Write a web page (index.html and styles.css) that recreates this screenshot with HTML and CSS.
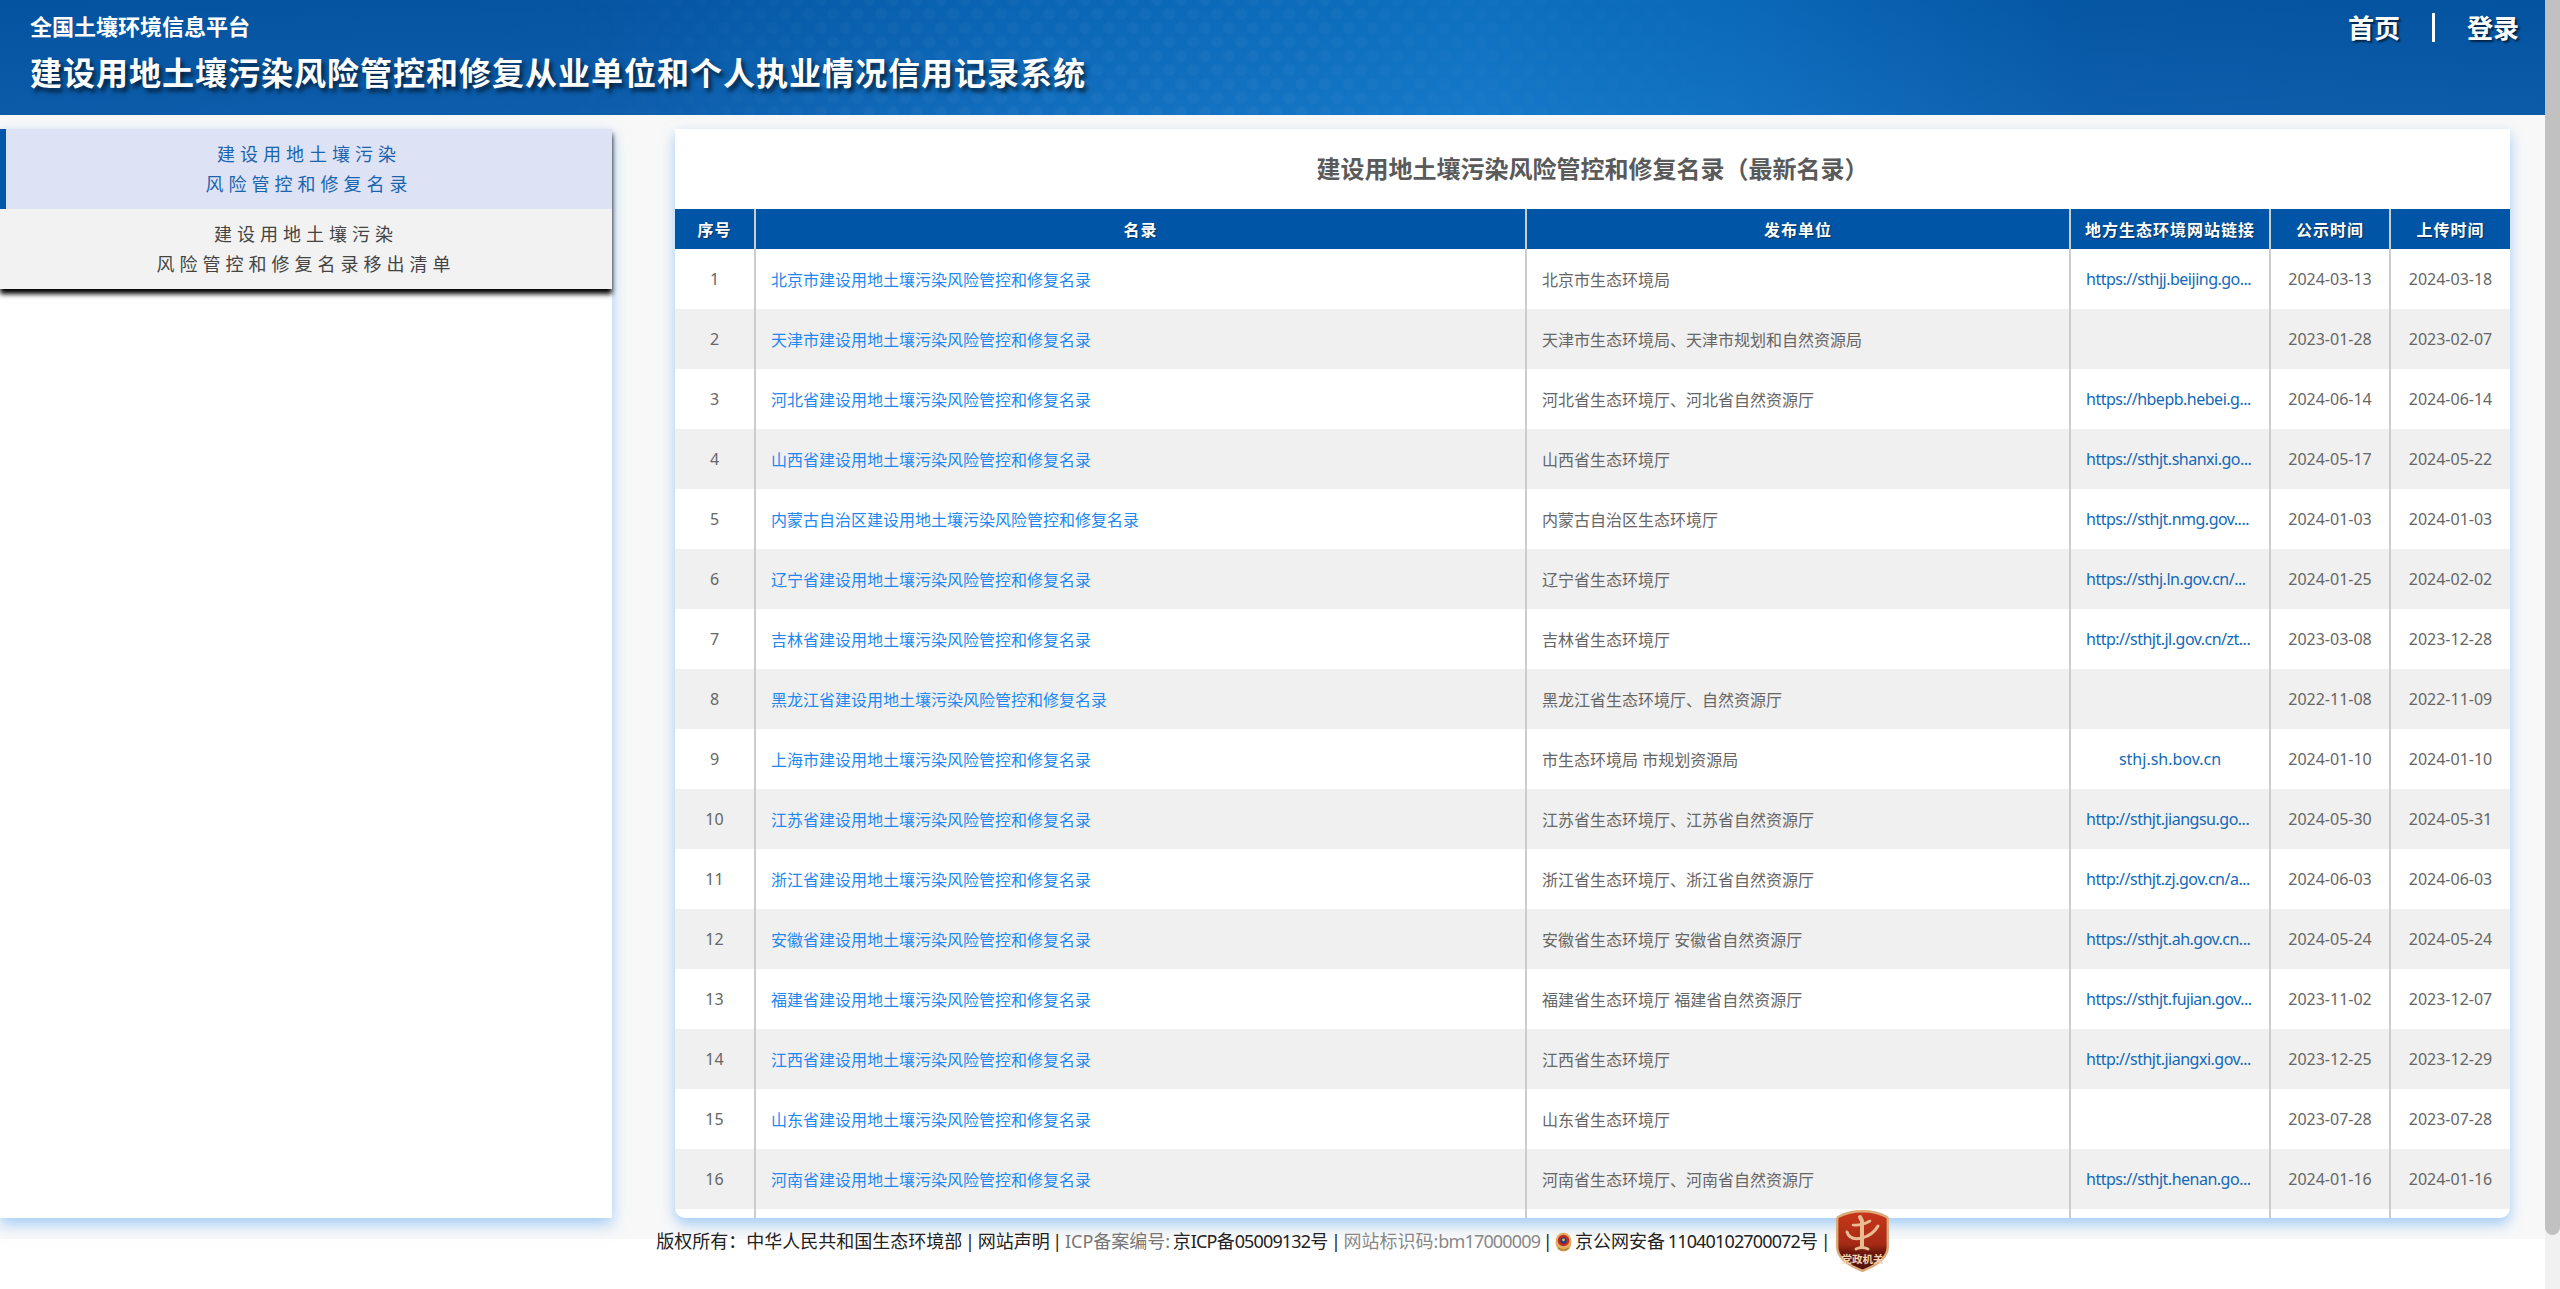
FILE: index.html
```html
<!DOCTYPE html>
<html lang="zh-CN">
  <head>
    <meta charset="utf-8" />
    <title>建设用地土壤污染风险管控和修复从业单位和个人执业情况信用记录系统</title>
    <link rel="stylesheet" href="styles.css">
  </head>
  <body>
    <div class="page">
      <div class="content">
        <header class="top-bar">
          <div class="brand">
            <p class="brand-small">全国土壤环境信息平台</p>
            <h1 class="brand-title">建设用地土壤污染风险管控和修复从业单位和个人执业情况信用记录系统</h1>
          </div>
          <nav class="top-nav">
            <a href="#">首页</a>
            <span class="top-nav-line"></span>
            <a href="#">登录</a>
          </nav>
        </header>

        <main class="layout">
          <aside class="side-panel">
            <ul class="side-menu">
              <li class="side-item active">建设用地土壤污染<br />风险管控和修复名录</li>
              <li class="side-item">建设用地土壤污染<br />风险管控和修复名录移出清单</li>
            </ul>
          </aside>

          <section class="card">
            <h2 class="card-title">建设用地土壤污染风险管控和修复名录（最新名录）</h2>
            <table class="list">
              <colgroup>
                <col class="col-no" />
                <col class="col-name" />
                <col class="col-org" />
                <col class="col-link" />
                <col class="col-date" />
                <col class="col-last" />
              </colgroup>
              <thead>
                <tr>
                  <th>序号</th>
                  <th>名录</th>
                  <th>发布单位</th>
                  <th>地方生态环境网站链接</th>
                  <th>公示时间</th>
                  <th>上传时间</th>
                </tr>
              </thead>
              <tbody>
                <tr>
                  <td>1</td>
                  <td class="left"><a class="name" href="#">北京市建设用地土壤污染风险管控和修复名录</a></td>
                  <td class="left">北京市生态环境局</td>
                  <td class="url"><a href="#">https://sthjj.beijing.go...</a></td>
                  <td>2024-03-13</td>
                  <td>2024-03-18</td>
                </tr>
                <tr>
                  <td>2</td>
                  <td class="left"><a class="name" href="#">天津市建设用地土壤污染风险管控和修复名录</a></td>
                  <td class="left">天津市生态环境局、天津市规划和自然资源局</td>
                  <td class="url"></td>
                  <td>2023-01-28</td>
                  <td>2023-02-07</td>
                </tr>
                <tr>
                  <td>3</td>
                  <td class="left"><a class="name" href="#">河北省建设用地土壤污染风险管控和修复名录</a></td>
                  <td class="left">河北省生态环境厅、河北省自然资源厅</td>
                  <td class="url"><a href="#">https://hbepb.hebei.g...</a></td>
                  <td>2024-06-14</td>
                  <td>2024-06-14</td>
                </tr>
                <tr>
                  <td>4</td>
                  <td class="left"><a class="name" href="#">山西省建设用地土壤污染风险管控和修复名录</a></td>
                  <td class="left">山西省生态环境厅</td>
                  <td class="url"><a href="#">https://sthjt.shanxi.go...</a></td>
                  <td>2024-05-17</td>
                  <td>2024-05-22</td>
                </tr>
                <tr>
                  <td>5</td>
                  <td class="left"><a class="name" href="#">内蒙古自治区建设用地土壤污染风险管控和修复名录</a></td>
                  <td class="left">内蒙古自治区生态环境厅</td>
                  <td class="url"><a href="#">https://sthjt.nmg.gov....</a></td>
                  <td>2024-01-03</td>
                  <td>2024-01-03</td>
                </tr>
                <tr>
                  <td>6</td>
                  <td class="left"><a class="name" href="#">辽宁省建设用地土壤污染风险管控和修复名录</a></td>
                  <td class="left">辽宁省生态环境厅</td>
                  <td class="url"><a href="#">https://sthj.ln.gov.cn/...</a></td>
                  <td>2024-01-25</td>
                  <td>2024-02-02</td>
                </tr>
                <tr>
                  <td>7</td>
                  <td class="left"><a class="name" href="#">吉林省建设用地土壤污染风险管控和修复名录</a></td>
                  <td class="left">吉林省生态环境厅</td>
                  <td class="url"><a href="#">http://sthjt.jl.gov.cn/zt...</a></td>
                  <td>2023-03-08</td>
                  <td>2023-12-28</td>
                </tr>
                <tr>
                  <td>8</td>
                  <td class="left"><a class="name" href="#">黑龙江省建设用地土壤污染风险管控和修复名录</a></td>
                  <td class="left">黑龙江省生态环境厅、自然资源厅</td>
                  <td class="url"></td>
                  <td>2022-11-08</td>
                  <td>2022-11-09</td>
                </tr>
                <tr>
                  <td>9</td>
                  <td class="left"><a class="name" href="#">上海市建设用地土壤污染风险管控和修复名录</a></td>
                  <td class="left">市生态环境局 市规划资源局</td>
                  <td class="url center"><a href="#">sthj.sh.bov.cn</a></td>
                  <td>2024-01-10</td>
                  <td>2024-01-10</td>
                </tr>
                <tr>
                  <td>10</td>
                  <td class="left"><a class="name" href="#">江苏省建设用地土壤污染风险管控和修复名录</a></td>
                  <td class="left">江苏省生态环境厅、江苏省自然资源厅</td>
                  <td class="url"><a href="#">http://sthjt.jiangsu.go...</a></td>
                  <td>2024-05-30</td>
                  <td>2024-05-31</td>
                </tr>
                <tr>
                  <td>11</td>
                  <td class="left"><a class="name" href="#">浙江省建设用地土壤污染风险管控和修复名录</a></td>
                  <td class="left">浙江省生态环境厅、浙江省自然资源厅</td>
                  <td class="url"><a href="#">http://sthjt.zj.gov.cn/a...</a></td>
                  <td>2024-06-03</td>
                  <td>2024-06-03</td>
                </tr>
                <tr>
                  <td>12</td>
                  <td class="left"><a class="name" href="#">安徽省建设用地土壤污染风险管控和修复名录</a></td>
                  <td class="left">安徽省生态环境厅 安徽省自然资源厅</td>
                  <td class="url"><a href="#">https://sthjt.ah.gov.cn...</a></td>
                  <td>2024-05-24</td>
                  <td>2024-05-24</td>
                </tr>
                <tr>
                  <td>13</td>
                  <td class="left"><a class="name" href="#">福建省建设用地土壤污染风险管控和修复名录</a></td>
                  <td class="left">福建省生态环境厅 福建省自然资源厅</td>
                  <td class="url"><a href="#">https://sthjt.fujian.gov...</a></td>
                  <td>2023-11-02</td>
                  <td>2023-12-07</td>
                </tr>
                <tr>
                  <td>14</td>
                  <td class="left"><a class="name" href="#">江西省建设用地土壤污染风险管控和修复名录</a></td>
                  <td class="left">江西省生态环境厅</td>
                  <td class="url"><a href="#">http://sthjt.jiangxi.gov...</a></td>
                  <td>2023-12-25</td>
                  <td>2023-12-29</td>
                </tr>
                <tr>
                  <td>15</td>
                  <td class="left"><a class="name" href="#">山东省建设用地土壤污染风险管控和修复名录</a></td>
                  <td class="left">山东省生态环境厅</td>
                  <td class="url"></td>
                  <td>2023-07-28</td>
                  <td>2023-07-28</td>
                </tr>
                <tr>
                  <td>16</td>
                  <td class="left"><a class="name" href="#">河南省建设用地土壤污染风险管控和修复名录</a></td>
                  <td class="left">河南省生态环境厅、河南省自然资源厅</td>
                  <td class="url"><a href="#">https://sthjt.henan.go...</a></td>
                  <td>2024-01-16</td>
                  <td>2024-01-16</td>
                </tr>
                <tr class="tail">
                  <td></td><td></td><td></td><td></td><td></td><td></td>
                </tr>
              </tbody>
            </table>
          </section>
        </main>

        <footer class="foot">
          <span class="foot-text">版权所有：中华人民共和国生态环境部 | 网站声明 | <span class="muted">ICP备案编号:</span> 京<span class="num">ICP</span>备<span class="num">05009132</span>号 | <span class="muted-light">网站标识码:<span class="num">bm17000009</span></span> |
            <svg class="police" viewBox="0 0 17 21">
              <ellipse cx="8.5" cy="11" rx="8" ry="9.5" fill="#e0b060" />
              <circle cx="8.5" cy="9.5" r="5.8" fill="#c8281e" />
              <circle cx="8.5" cy="9.5" r="3.2" fill="#23407f" />
              <circle cx="8.5" cy="8.8" r="1.4" fill="#e8c050" />
              <path d="M3 17 Q8.5 21 14 17" fill="none" stroke="#b98a3a" stroke-width="1.6" />
            </svg>
            京公网安备 <span class="num">11040102700072</span>号 |</span>
          <svg class="badge" viewBox="0 0 53 62">
            <defs>
              <linearGradient id="shieldFill" x1="0" y1="0" x2="0" y2="1">
                <stop offset="0" stop-color="#c9371c" />
                <stop offset="0.55" stop-color="#a62b14" />
                <stop offset="0.7" stop-color="#6d170c" />
                <stop offset="1" stop-color="#4e0f08" />
              </linearGradient>
            </defs>
            <path
              d="M26.5 1.2 C18 1.2 9 3 2.2 7 C1.4 7.5 1.2 8 1.2 9 V37 C1.2 48 14 56 26.5 60.8 C39 56 51.8 48 51.8 37 V9 C51.8 8 51.6 7.5 50.8 7 C44 3 35 1.2 26.5 1.2 Z"
              fill="url(#shieldFill)"
              stroke="#dcab7c"
              stroke-width="2.4"
            />
            <g fill="none" stroke="#e8bd92" stroke-linecap="round">
              <path d="M24 7 L26 11 M26 12 V37" stroke-width="4" />
              <path d="M17 15 Q25 16 34 11" stroke-width="2.6" />
              <path d="M11 22 Q14 31 26 28 Q37 25 42 16" stroke-width="3" />
              <path d="M20 39 Q26 36 32 39" stroke-width="2.8" />
            </g>
            <text class="badge-text" x="26.5" y="53" text-anchor="middle">党政机关</text>
          </svg>
        </footer>
      </div>

      <div class="scroll-track"><div class="scroll-thumb"></div></div>
    </div>
  </body>
</html>
```

FILE: styles.css
```css
html,
body {
  margin: 0;
  height: 100%;
  overflow: hidden;
}

body {
  background-color: #fff;
  color: #666;
  font-family: "Noto Sans", "Noto Sans CJK SC", sans-serif;
  font-size: 16px;
}

a {
  text-decoration: none;
}

.page {
  display: flex;
  height: 1289px;
}

.content {
  flex: 1;
  min-width: 0;
}

/* fake window scrollbar, the screenshot has one */
.scroll-track {
  width: 15px;
  background-color: #f1f1f1;
}

.scroll-thumb {
  height: 1235px;
  background-color: #c1c1c1;
  border-radius: 0 0 8px 8px;
}

/* top bar */
.top-bar {
  position: relative;
  display: flex;
  justify-content: space-between;
  height: 115px;
  box-sizing: border-box;
  padding: 0 26px 0 30px;
  color: #fff;
  background:
    linear-gradient(180deg, rgba(0, 0, 0, 0.04), rgba(255, 255, 255, 0.03)),
    linear-gradient(
      90deg,
      #0456a6 0%,
      #0558a9 24%,
      #0a69bb 40%,
      #0e74c7 58%,
      #0b6dc0 68%,
      #0559a9 82%,
      #0456a6 100%
    );
}

.top-bar::before {
  content: "";
  position: absolute;
  top: 0;
  bottom: 0;
  left: 20%;
  right: 30%;
  background-image:
    radial-gradient(circle, rgba(255, 255, 255, 0.03) 5px, transparent 7px),
    radial-gradient(circle, rgba(255, 255, 255, 0.03) 5px, transparent 7px);
  background-size: 24px 28px;
  background-position: 0 0, 12px 14px;
  -webkit-mask-image: linear-gradient(90deg, transparent, #000 30%, #000 60%, transparent);
  mask-image: linear-gradient(90deg, transparent, #000 30%, #000 60%, transparent);
}

.brand,
.top-nav {
  position: relative;
}

.brand-small {
  margin: 10px 0 0;
  font-size: 22px;
  line-height: 32px;
  font-weight: 700;
}

.brand-title {
  margin: 9px 0 0;
  font-size: 32px;
  line-height: 44px;
  font-weight: 700;
  letter-spacing: 1px;
  text-shadow: 3px 4px 4px rgba(0, 0, 0, 0.65);
}

.top-nav {
  display: flex;
  align-items: center;
  gap: 32px;
  height: 54px;
}

.top-nav a {
  color: #fff;
  font-size: 26px;
  font-weight: 700;
  text-shadow: 2px 2px 2px rgba(0, 0, 0, 0.6);
}

.top-nav-line {
  width: 3px;
  height: 29px;
  background-color: #fff;
}

/* main area */
.layout {
  display: flex;
  gap: 63px;
  padding: 14px 35px 21px 0;
  background-color: #f8f8f8;
}

.side-panel {
  flex: none;
  width: 612px;
  height: 1089px;
  background-color: #fff;
  box-shadow: 0 6px 14px rgba(90, 165, 245, 0.55);
}

.side-menu {
  margin: 0;
  padding: 0;
  list-style: none;
  box-shadow: 0 5px 5px #000;
}

.side-item {
  height: 80px;
  box-sizing: border-box;
  padding-top: 10px;
  text-align: center;
  font-size: 18px;
  line-height: 30px;
  letter-spacing: 5px;
  color: #444;
  background-color: #f2f2f2;
}

.side-item.active {
  color: #1a64ae;
  background-color: #dde2f5;
  border-left: 6px solid #0055a6;
}

.card {
  flex: 1;
  min-width: 0;
  height: 1089px;
  overflow: hidden;
  background-color: #fff;
  border-radius: 0 0 10px 10px;
  box-shadow: 0 6px 14px rgba(90, 165, 245, 0.55);
}

.card-title {
  margin: 0;
  height: 80px;
  text-align: center;
  font-size: 24px;
  line-height: 80px;
  font-weight: 700;
  color: #5a5a5a;
}

.list {
  width: 100%;
  table-layout: fixed;
  border-collapse: separate;
  border-spacing: 0;
}

.col-no {
  width: 79px;
}

.col-name {
  width: 771px;
}

.col-org {
  width: 544px;
}

.col-link {
  width: 200px;
}

.col-date {
  width: 120px;
}

.col-last {
  width: 121px;
}

.list th {
  height: 40px;
  padding: 0;
  color: #fff;
  background-color: #0055a6;
  font-weight: 700;
  letter-spacing: 1px;
  text-shadow: 1px 1px 1px rgba(0, 0, 0, 0.4);
}

.list td {
  height: 60px;
  box-sizing: border-box;
  padding: 0 15px;
  text-align: center;
  white-space: nowrap;
}

.list th + th,
.list td + td {
  border-left: 2px solid #ccc;
}

.list tbody tr:nth-child(even) td {
  background-color: #f0f0f0;
}

.list td.left {
  text-align: left;
}

.list td.url {
  text-align: left;
  letter-spacing: -0.5px;
}

.list td.url.center {
  text-align: center;
  letter-spacing: 0;
}

.url a {
  color: #1369b8;
}

.name {
  color: #2288f0;
}

.list .tail td {
  height: 9px;
  padding: 0;
}

/* footer */
.foot {
  position: relative;
  display: flex;
  justify-content: center;
  align-items: center;
  gap: 5px;
  height: 62px;
  margin-top: -29px;
}

.foot-text {
  font-size: 18px;
  line-height: 24px;
  word-spacing: -2px;
  color: #222;
  white-space: nowrap;
}

.num {
  letter-spacing: -0.85px;
}

.muted {
  color: #777;
}

.muted-light {
  color: #888;
}

.police {
  width: 17px;
  height: 21px;
  vertical-align: -4px;
}

.badge {
  width: 53px;
  height: 62px;
}

.badge-text {
  font-size: 10.5px;
  font-weight: 700;
  fill: #f2d4b2;
}
```
